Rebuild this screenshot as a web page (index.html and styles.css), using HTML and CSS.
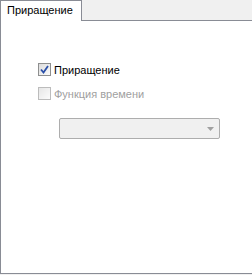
FILE: index.html
```html
<!DOCTYPE html>
<html lang="ru">
<head>
  <meta charset="UTF-8">
  <title>Приращение</title>
  <link rel="stylesheet" href="styles.css">
</head>
<body>
  <div class="tabstrip">
    <div class="tab">Приращение</div>
    <div class="tab-fill"></div>
  </div>
  <div class="panel">
    <label class="check">
      <span class="box checked">
        <svg viewBox="0 0 9 9" width="9" height="9"><path d="M1 4.5 L3.5 7.5 L8 1" fill="none" stroke="#2a4fa8" stroke-width="1.8"/></svg>
      </span>
      Приращение
    </label>
    <label class="check disabled">
      <span class="box"></span>
      Функция времени
    </label>
    <div class="combo">
      <svg class="arrow" viewBox="0 0 7 4" width="7" height="4"><path d="M0 0 H7 L3.5 4 Z" fill="#a0a0a0"/></svg>
    </div>
  </div>
</body>
</html>
```

FILE: styles.css
```css
html, body {
  margin: 0;
  padding: 0;
}
body {
  background: #f0f0f0;
  font-family: "Liberation Sans", Arial, sans-serif;
  font-size: 11px;
  color: #000;
  width: 252px;
  height: 275px;
  overflow: hidden;
}

/* tab header */
.tabstrip {
  display: flex;
  height: 21px;
}
.tab {
  width: 82px;
  height: 21px;
  box-sizing: border-box;
  background: #fff;
  border: 1px solid #898c95;
  border-bottom: none;
  padding-left: 6px;
  line-height: 19px;
}
.tab-fill {
  flex: 1;
  border-bottom: 1px solid #898c95;
}

.panel {
  background: #fff;
  border-left: 1px solid #898c95;
  border-bottom: 1px solid #898c95;
  height: 253px;
  box-sizing: border-box;
  padding: 42px 0 0 37px;
}

.check {
  display: flex;
  align-items: center;
  gap: 3px;
  height: 13px;
  margin-bottom: 11px;
}
.check.disabled {
  color: #a0a0a0;
}
.box {
  width: 13px;
  height: 13px;
  box-sizing: border-box;
  border: 1px solid #8e8f8f;
  background: linear-gradient(135deg, #dcdcdc 0%, #fbfbfb 100%);
  display: flex;
  align-items: center;
  justify-content: center;
}
.check.disabled .box {
  border-color: #bcbcbc;
  background: linear-gradient(135deg, #e6e6e6 0%, #fcfcfc 100%);
}

.combo {
  margin: 18px 0 0 21px;
  width: 161px;
  height: 21px;
  box-sizing: border-box;
  border: 1px solid #adadad;
  border-radius: 2px;
  background: #f0f0f0;
  display: flex;
  align-items: center;
  justify-content: flex-end;
  padding-right: 5px;
}
```
